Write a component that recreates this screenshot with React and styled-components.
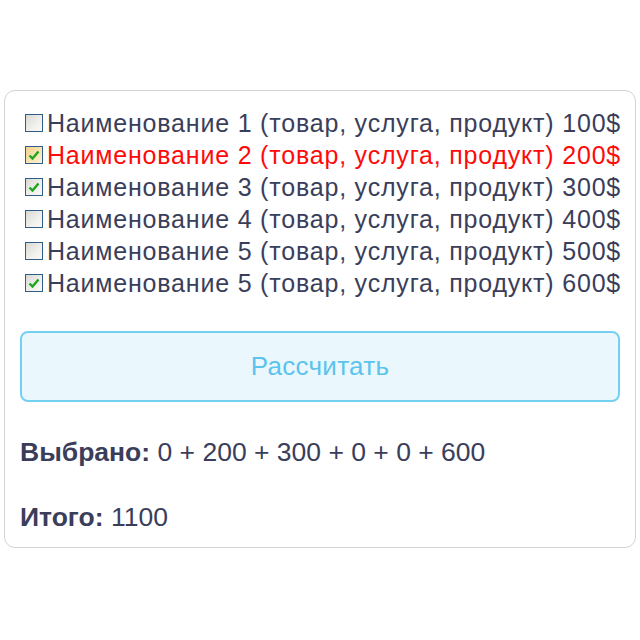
import React, { useState } from "react";
import styled, { createGlobalStyle } from "styled-components";

const Global = createGlobalStyle`
  html, body { margin: 0; padding: 0; background: #ffffff; }
  body { font-family: "Liberation Sans", Arial, sans-serif; }
`;

const Page = styled.div`
  width: 640px;
  height: 640px;
  box-sizing: border-box;
  padding: 90px 4px 0 4px;
`;

const Card = styled.div`
  box-sizing: border-box;
  width: 632px;
  height: 458px;
  border: 1px solid #d4d4d4;
  border-radius: 11px;
  padding: 16px 15px 14px 15px;
  display: flex;
  flex-direction: column;
`;

const List = styled.div`
  display: flex;
  flex-direction: column;
  padding-left: 5px;
`;

const Row = styled.label`
  display: flex;
  align-items: center;
  height: 32px;
  font-size: 25px;
  letter-spacing: 0.8px;
  color: ${(p) => (p.$hot ? "#ff0a0a" : "#3a3e5a")};
  white-space: nowrap;
  cursor: pointer;
`;

const Box = styled.span`
  box-sizing: border-box;
  width: 18px;
  height: 18px;
  margin-right: 4px;
  border: 1.5px solid #2f5d8a;
  background: ${(p) =>
    p.$warm
      ? "linear-gradient(135deg, #f2d28e 0%, #f7e6b8 60%, #fbf3dc 100%)"
      : "linear-gradient(135deg, #d9d9d4 0%, #eeeeea 55%, #fafaf8 100%)"};
  display: flex;
  align-items: center;
  justify-content: center;
  flex: none;
`;

const Btn = styled.button`
  margin-top: 32px;
  height: 72px;
  width: 100%;
  box-sizing: border-box;
  border: 2px solid #74d0f1;
  border-radius: 8px;
  background: #eaf8fe;
  color: #5bc3ec;
  font-family: "Liberation Sans", Arial, sans-serif;
  font-size: 26px;
  letter-spacing: 0.3px;
  cursor: pointer;
`;

const Line = styled.div`
  margin-top: ${(p) => p.$gap}px;
  height: 32px;
  line-height: 32px;
  font-size: 26.5px;
  color: #3a3e5a;
  white-space: nowrap;
`;

const Key = styled.b`
  font-weight: 700;
`;

const Tick = () => (
  <svg width="12" height="11" viewBox="0 0 12 11">
    <path d="M1.5 5.5 L4.5 8.5 L10.5 1.5" fill="none" stroke="#1ea51e" strokeWidth="2.4" />
  </svg>
);

const items = [
  { n: 1, price: 100 },
  { n: 2, price: 200 },
  { n: 3, price: 300 },
  { n: 4, price: 400 },
  { n: 5, price: 500 },
  { n: 5, price: 600 },
];

export default function App() {
  const [checked, setChecked] = useState([false, true, true, false, false, true]);
  const picked = items.map((it, i) => (checked[i] ? it.price : 0));
  const total = picked.reduce((a, b) => a + b, 0);

  return (
    <Page>
      <Global />
      <Card>
        <List>
          {items.map((it, i) => (
            <Row
              key={i}
              $hot={i === 1}
              onClick={() =>
                setChecked((c) => c.map((v, j) => (j === i ? !v : v)))
              }
            >
              <Box $warm={i === 1}>{checked[i] && <Tick />}</Box>
              Наименование {it.n} (товар, услуга, продукт) {it.price}$
            </Row>
          ))}
        </List>
        <Btn>Рассчитать</Btn>
        <Line $gap={34}>
          <Key>Выбрано:</Key> {picked.join(" + ")}
        </Line>
        <Line $gap={33}>
          <Key>Итого:</Key> {total}
        </Line>
      </Card>
    </Page>
  );
}
